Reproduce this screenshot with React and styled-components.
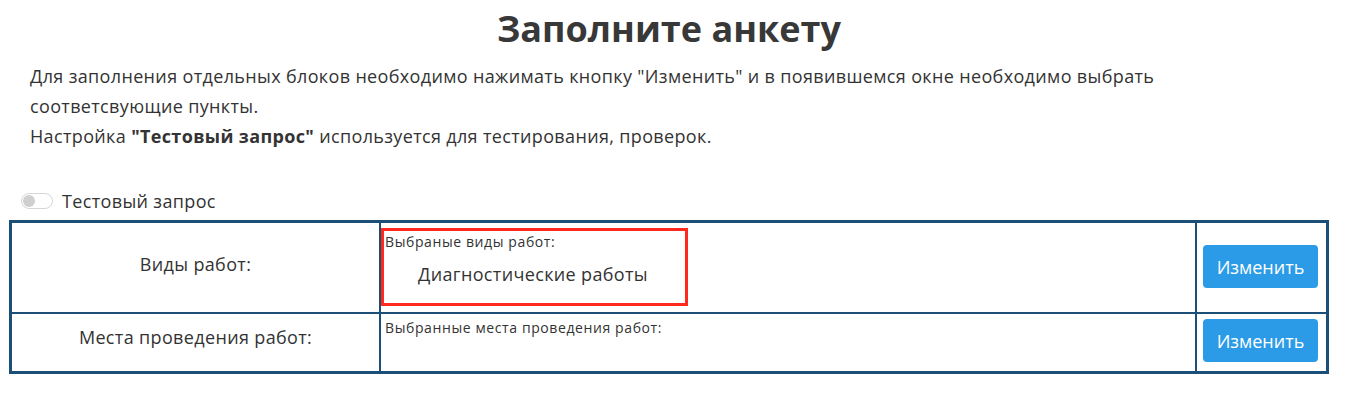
import React from 'react'
import styled, { createGlobalStyle } from 'styled-components'

const GlobalStyle = createGlobalStyle`
  body {
    margin: 0;
    background: #fff;
    font-family: "Open Sans", Lato, sans-serif;
    color: #333;
  }
`

const Page = styled.div`
  width: 1354px;
  padding: 0 25px 0 9px;
  box-sizing: border-box;
`

const Title = styled.h1`
  margin: 0;
  padding-top: 7px;
  height: 51px;
  text-align: center;
  font-size: 36px;
  font-weight: 700;
  color: #383838;
  line-height: 44px;
`

const Intro = styled.div`
  padding: 3px 0 0 21px;
  font-size: 18px;
  letter-spacing: 0.35px;
  line-height: 30px;
  color: #333;
  b {
    font-weight: 700;
  }
`

const ToggleRow = styled.label`
  display: flex;
  align-items: center;
  gap: 9px;
  margin: 38px 0 0 12px;
  height: 24px;
  font-size: 18px;
  letter-spacing: 0.35px;
  color: #333;
`

const Switch = styled.span`
  position: relative;
  width: 30px;
  height: 14px;
  border: 1px solid #d6d6d6;
  border-radius: 8px;
  background: #fff;
  &::after {
    content: '';
    position: absolute;
    left: 1px;
    top: 1px;
    width: 12px;
    height: 12px;
    border-radius: 50%;
    background: #cfcfcf;
  }
`

const Grid = styled.div`
  margin-top: 7px;
  display: grid;
  grid-template-columns: 367px 1fr 129px;
  grid-template-rows: 89px 57px;
  gap: 2px;
  width: 1320px;
  box-sizing: border-box;
  border: 3px solid #1b4f78;
  background: #1b4f78;
`

const LabelCell = styled.div`
  background: #fff;
  display: flex;
  align-items: center;
  justify-content: center;
  font-size: 18px;
  letter-spacing: 0.35px;
  color: #333;
  padding-bottom: ${(p) => p.$lift || 0}px;
`

const ValueCell = styled.div`
  background: #fff;
  padding: 5px 4px;
`

const Highlight = styled.div`
  margin: 0 0 0 -4px;
  width: 307px;
  height: 78px;
  box-sizing: border-box;
  border: 3px solid #ff2a1f;
  padding: 2px 1px;
`

const Caption = styled.div`
  font-size: 14px;
  letter-spacing: 0.6px;
  line-height: 18px;
  color: #333;
`

const Chosen = styled.div`
  margin: 11px 0 0 33px;
  font-size: 18px;
  letter-spacing: 0.35px;
  color: #333;
`

const ActionCell = styled.div`
  background: #fff;
  display: flex;
  align-items: center;
  padding-left: 6px;
  padding-bottom: ${(p) => p.$lift || 0}px;
`

const EditButton = styled.button`
  width: 115px;
  height: 43px;
  border: none;
  border-radius: 4px;
  background: #2b9be8;
  color: #fff;
  font-family: inherit;
  font-size: 18px;
  cursor: pointer;
`

export default function App() {
  return (
    <Page>
      <GlobalStyle />
      <Title>Заполните анкету</Title>
      <Intro>
        Для заполнения отдельных блоков необходимо нажимать кнопку "Изменить" и в появившемся окне необходимо выбрать
        <br />
        соответсвующие пункты.
        <br />
        Настройка <b>"Тестовый запрос"</b> используется для тестирования, проверок.
      </Intro>
      <ToggleRow>
        <Switch />
        Тестовый запрос
      </ToggleRow>
      <Grid>
        <LabelCell $lift={8}>Виды работ:</LabelCell>
        <ValueCell>
          <Highlight>
            <Caption>Выбраные виды работ:</Caption>
            <Chosen>Диагностические работы</Chosen>
          </Highlight>
        </ValueCell>
        <ActionCell $lift={2}>
          <EditButton>Изменить</EditButton>
        </ActionCell>
        <LabelCell $lift={12}>Места проведения работ:</LabelCell>
        <ValueCell>
          <Caption>Выбранные места проведения работ:</Caption>
        </ValueCell>
        <ActionCell $lift={4}>
          <EditButton>Изменить</EditButton>
        </ActionCell>
      </Grid>
    </Page>
  )
}
